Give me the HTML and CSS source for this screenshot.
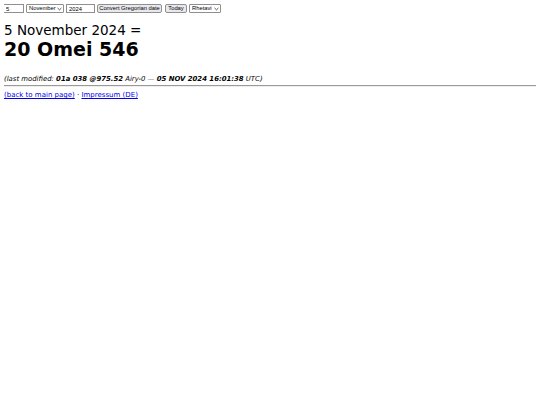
FILE: index.html
```html
<!DOCTYPE html>
<html>
<head>
<meta charset="utf-8">
<link rel="stylesheet" href="styles.css">
</head>
<body>
<form class="conv">
<input class="day" type="text" value="5">
<span class="sel month"><select><option>November</option></select><svg class="chev" viewBox="0 0 6 4" width="5" height="4"><path d="M0.7 0.8 L3 3 L5.3 0.8" fill="none" stroke="#333" stroke-width="1"/></svg></span>
<input class="year" type="text" value="2024">
<button class="btn conv-btn" type="button">Convert Gregorian date</button>
<button class="btn today" type="button">Today</button>
<span class="sel cal"><select><option>Rhetavi</option></select><svg class="chev" viewBox="0 0 6 4" width="5" height="4"><path d="M0.7 0.8 L3 3 L5.3 0.8" fill="none" stroke="#333" stroke-width="1"/></svg></span>
</form>
<div class="greg">5 November 2024 =</div>
<div class="result">20 Omei 546</div>
<p class="mod">(last modified: <b>01a 038 @975.52</b> Airy-0 — <b>05 NOV 2024 16:01:38</b> UTC)</p>
<hr class="rule">
<p class="links"><a href="#">(back to main page)</a> · <a href="#">Impressum (DE)</a></p>
</body>
</html>
```
FILE: styles.css
```css
html, body { background: #fff; }
body {
  margin: 4px;
  font-family: "DejaVu Sans", Verdana, sans-serif;
  font-size: 7px;
  color: #000;
}
.conv {
  display: flex;
  align-items: center;
  margin: 0;
  height: 9px;
}
.conv input, .conv select, .conv button {
  font-family: "Liberation Sans", Arial, sans-serif;
  font-size: 5.8px;
  height: 9px;
  box-sizing: border-box;
  margin: 0;
  padding: 0 2px;
  border: 1px solid #8f8f8f;
  background: #fff;
  color: #000;
  line-height: 7px;
  outline: none;
}
.conv .day { width: 21px; margin-left: -1px; }
.conv .sel { position: relative; display: block; height: 9px; }
.conv .sel select {
  appearance: none;
  -webkit-appearance: none;
  width: 100%;
  border-radius: 1px;
  padding: 0 2px;
}
.conv .chev { position: absolute; right: 2px; top: 3px; }
.conv .month { width: 38px; margin-left: 2px; }
.conv .year { width: 29px; margin-left: 2px; }
.conv .btn {
  background: #e9e9ed;
  border-radius: 2px;
  padding: 0 1px;
  border-color: #8f8f8f;
}
.conv .conv-btn { width: 65px; margin-left: 2px; }
.conv .today { width: 22px; margin-left: 3px; }
.conv .cal { width: 32px; margin-left: 2px; }
.greg {
  font-size: 13.5px;
  margin-top: 9px;
  line-height: 16px;
}
.result {
  font-size: 19px;
  font-weight: bold;
  line-height: 22px;
}
.mod {
  font-style: italic;
  font-size: 6.9px;
  margin: 14px 0 0 0;
  line-height: 10px;
}
.rule {
  margin: 1px 0 0 0;
  border: 0;
  border-top: 1px solid #9a9a9a;
  border-bottom: 1px solid #eee;
  height: 0;
}
.links {
  margin: 3px 0 0 0;
  line-height: 10px;
}
.links a { color: #0000ee; }
```
